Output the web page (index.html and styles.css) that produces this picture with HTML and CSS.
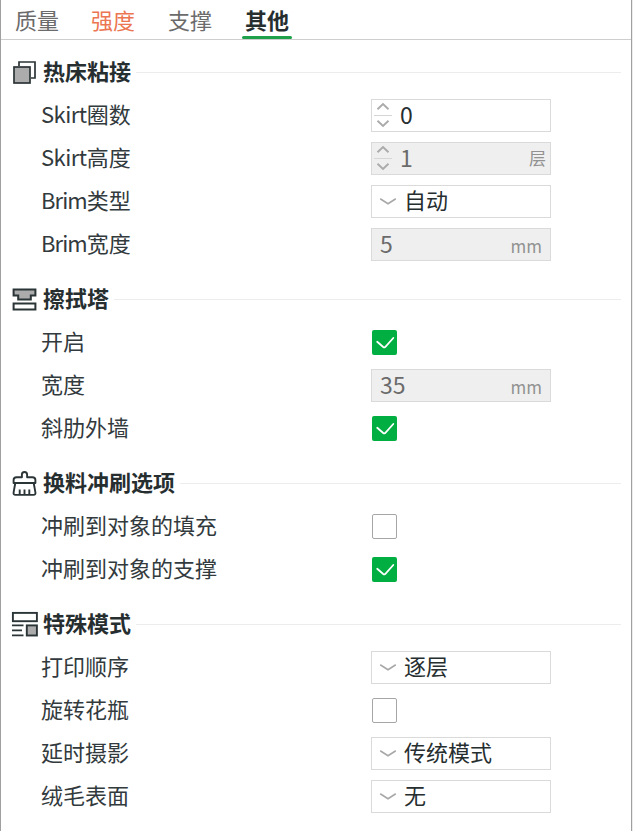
FILE: index.html
```html
<!DOCTYPE html>
<html lang="zh-CN">
<head>
<meta charset="utf-8">
<title>打印设置</title>
<link rel="stylesheet" href="styles.css">
</head>
<body>
<svg class="defs" width="0" height="0">
  <symbol id="spin" viewBox="0 0 18 27"><path d="M3.500 7.300 9 2l5.500 5.300M3.500 18.700 9 24l5.500-5.300" fill="none" stroke="#ababab" stroke-width="1.900"/><path d="M0 13.500h18" stroke="#d6d6d6"/></symbol>
  <symbol id="down" viewBox="0 0 18 8"><path d="M1.200 .8 9 5.700l7.800-4.900" fill="none" stroke="#a8a8a8" stroke-width="1.600"/></symbol>
  <symbol id="check" viewBox="0 0 25 25"><path d="M5.200 11.800 11.200 17q1 .7 2 0L21.300 8" fill="none" stroke="#fff" stroke-width="1.800" stroke-linecap="round"/></symbol>
</svg>
<main class="panel">
  <nav class="tabs">
    <a class="tab">质量</a>
    <a class="tab modified">强度</a>
    <a class="tab">支撑</a>
    <a class="tab active">其他</a>
  </nav>

  <section class="group">
    <h2 class="heading"><svg class="icon" viewBox="0 0 27 27"><path d="M8 7V3h16v16h-4" fill="none" stroke="#2b3436" stroke-width="1.700"/><rect x="3" y="8" width="16" height="16" fill="#acacac" stroke="#2b3436" stroke-width="1.700"/></svg><span class="title">热床粘接</span></h2>
    <div class="row"><span class="label"><span class="latin">Skirt</span>圈数</span><div class="field"><svg class="spin"><use href="#spin"/></svg><span class="num">0</span></div></div>
    <div class="row"><span class="label"><span class="latin">Skirt</span>高度</span><div class="field disabled"><svg class="spin"><use href="#spin"/></svg><span class="num">1</span><span class="unit cjk">层</span></div></div>
    <div class="row"><span class="label"><span class="latin brim">Brim</span>类型</span><div class="field"><svg class="down"><use href="#down"/></svg><span class="value">自动</span></div></div>
    <div class="row"><span class="label"><span class="latin brim">Brim</span>宽度</span><div class="field disabled plain"><span class="num">5</span><span class="unit">mm</span></div></div>
  </section>

  <section class="group">
    <h2 class="heading"><svg class="icon" viewBox="0 0 27 27"><path d="M2.600 3.500h21.800v6h-4.600v4.100H7.200V9.500H2.600z" fill="#acacac" stroke="#2b3436" stroke-width="2"/><rect x="2.600" y="17.500" width="21.800" height="6" fill="#fff" stroke="#2b3436" stroke-width="2"/></svg><span class="title">擦拭塔</span></h2>
    <div class="row"><span class="label">开启</span><svg class="box on"><use href="#check"/></svg></div>
    <div class="row"><span class="label">宽度</span><div class="field disabled plain"><span class="num">35</span><span class="unit">mm</span></div></div>
    <div class="row"><span class="label">斜肋外墙</span><svg class="box on"><use href="#check"/></svg></div>
  </section>

  <section class="group">
    <h2 class="heading"><svg class="icon" viewBox="0 0 27 27"><g fill="none" stroke="#2b3436" stroke-width="1.900" stroke-linejoin="round"><path d="M10.900 7.200V4.600Q10.900 2 13.500 2t2.600 2.600v2.600h5.300q3 0 3 2.800v3H2.600v-3q0-2.800 3-2.800z"/><path d="M4.300 13 2.600 22.300Q2.200 24.900 4.500 24.900h18q2.300 0 1.900-2.600L22.700 13M8.700 24.900v-5.400M13.500 24.900v-5.400M18.300 24.900v-5.400"/></g></svg><span class="title">换料冲刷选项</span></h2>
    <div class="row"><span class="label">冲刷到对象的填充</span><span class="box"></span></div>
    <div class="row"><span class="label">冲刷到对象的支撑</span><svg class="box on"><use href="#check"/></svg></div>
  </section>

  <section class="group">
    <h2 class="heading"><svg class="icon" viewBox="0 0 27 27"><g stroke="#2b3436" stroke-width="1.900"><rect x="1.900" y="1.900" width="24" height="8.300" fill="#fff"/><rect x="15.800" y="14.400" width="10.100" height="10.100" fill="#acacac"/><path d="M1 14.400h11.500M1 19.400h10M1 24.400h11.500"/></g></svg><span class="title">特殊模式</span></h2>
    <div class="row"><span class="label">打印顺序</span><div class="field"><svg class="down"><use href="#down"/></svg><span class="value">逐层</span></div></div>
    <div class="row"><span class="label">旋转花瓶</span><span class="box"></span></div>
    <div class="row"><span class="label">延时摄影</span><div class="field"><svg class="down"><use href="#down"/></svg><span class="value">传统模式</span></div></div>
    <div class="row"><span class="label">绒毛表面</span><div class="field"><svg class="down"><use href="#down"/></svg><span class="value">无</span></div></div>
  </section>
</main>
</body>
</html>
```
FILE: styles.css
```css
* { box-sizing: border-box; }
body {
  margin: 0;
  background: #ececec;
  color: #323a3d;
  font: 22px/32px "Noto Sans CJK SC", sans-serif;
}
.defs { display: none; }
.panel {
  width: 632px;
  height: 831px;
  overflow: hidden;
  background: #fff;
  border: solid #a0a0a0;
  border-width: 0 1px;
}
.tabs {
  display: flex;
  gap: 26px;
  height: 40px;
  padding-left: 11px;
  border-bottom: 1px solid #cecece;
}
.tab {
  width: 50px;
  height: 39px;
  padding-top: 3px;
  text-align: center;
  color: #6b6b6b;
}
.tab:nth-child(3) { margin-left: 1px; }
.tab.modified { color: #ec7652; }
.tab.active {
  margin-left: 1px;
  color: #262e30;
  font-weight: 700;
}
.tab.active::after {
  content: "";
  display: block;
  height: 3.5px;
  margin-top: .7px;
  border-radius: 1.5px;
  background: #1fa14b;
}
.group { padding-top: 12px; }
.tabs + .group { padding-top: 11px; }
.heading {
  display: flex;
  align-items: center;
  height: 43px;
  margin: 0;
  padding: 0 10px;
  color: #262e30;
  font-size: 22px;
  font-weight: 700;
}
.heading::after {
  content: "";
  flex: 1;
  height: 1px;
  margin-left: 5px;
  background: #ededed;
}
.title, .label, .value { padding-bottom: 5px; }
.icon { width: 27px; height: 27px; margin-right: 5px; }
.row {
  display: flex;
  align-items: center;
  height: 43px;
  padding-left: 40px;
}
.label { width: 330px; }
.latin { letter-spacing: -.5px; }
.brim { letter-spacing: -.9px; }
.field {
  display: flex;
  align-items: center;
  width: 180px;
  height: 33px;
  padding-right: 4px;
  border: 1px solid #dadada;
  background: #fff;
  color: #262e30;
}
.disabled { background: #efefef; color: #6b6b6b; }
.plain { padding-left: 8px; padding-right: 8px; }
.num { padding-bottom: 4px; font-size: 23px; }
.spin { width: 18px; height: 27px; margin: 0 8px 0 2px; }
.down { width: 18px; height: 8px; margin: 0 7px; }
.unit {
  margin-left: auto;
  padding-top: 2px;
  font-size: 17px;
  color: #929292;
}
.cjk { padding: 0 0 2px; }
.box {
  width: 25px;
  height: 25px;
  margin-left: 1px;
  border: 1px solid #a6a6a6;
  border-radius: 2px;
}
.on { border: 0; background: #00ae42; }
```
